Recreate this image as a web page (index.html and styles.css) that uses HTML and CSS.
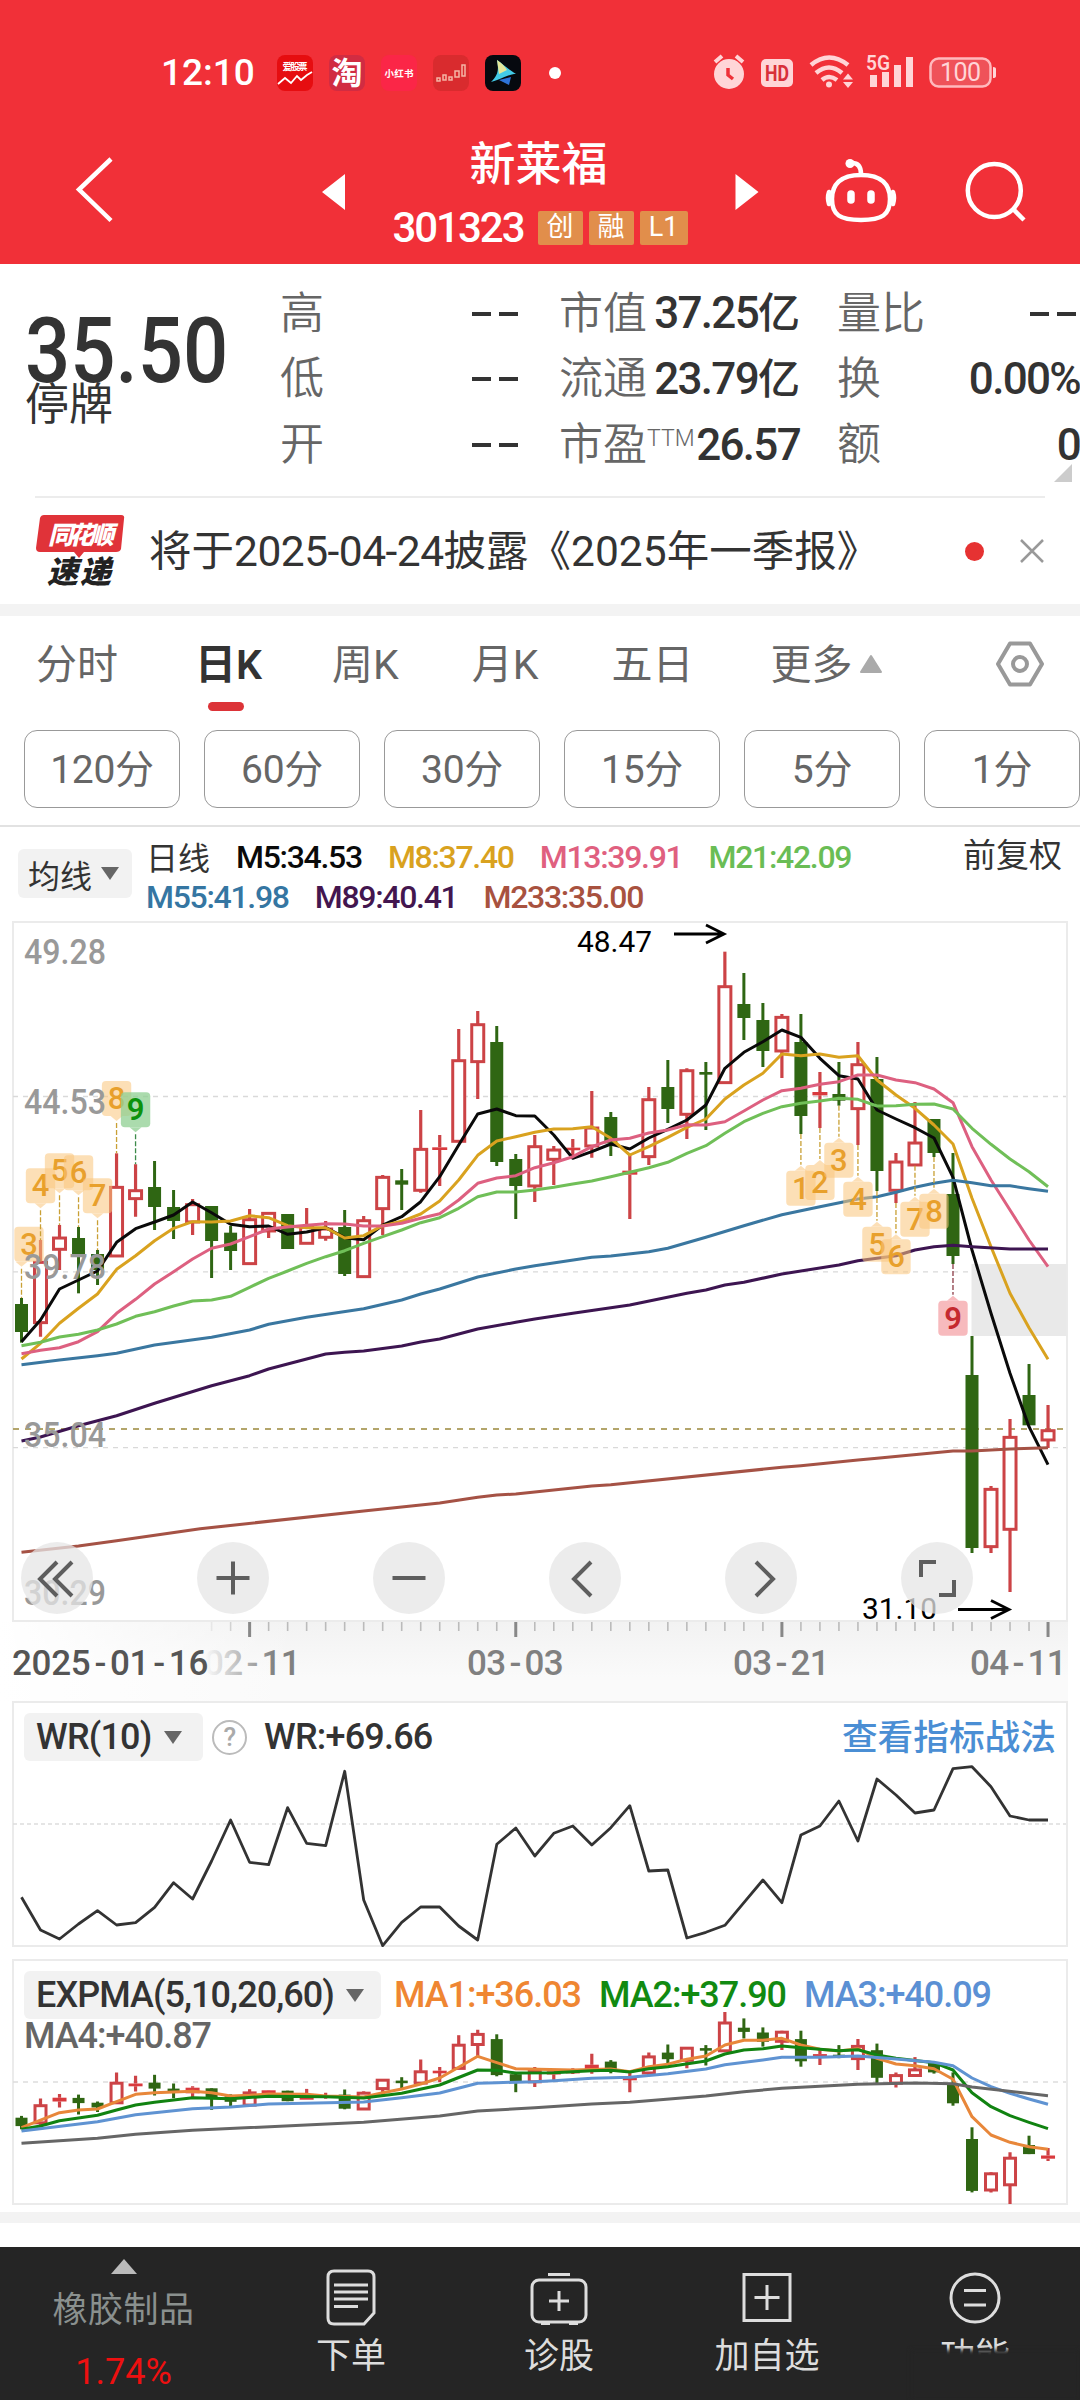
FILE: index.html
```html
<!DOCTYPE html>
<html lang="zh-CN">
<head>
<meta charset="utf-8">
<title>新莱福 301323</title>
<link rel="stylesheet" href="styles.css">
</head>
<body>
<header class="top">
  <div class="status">
    <span class="clock">12:10</span>
    <div class="apps">
      <svg width="36" height="36" viewBox="0 0 36 36"><rect width="36" height="36" rx="8" fill="#e60d10"/><text x="18" y="15" class="t-app" textLength="25">爱股票</text><path d="M1 29L8 23l6 5 6-7 4 4 6-5 5-3" fill="none" stroke="#fff" stroke-width="1.8"/></svg>
      <svg width="36" height="36" viewBox="0 0 36 36"><rect width="36" height="36" rx="8" fill="#d12c42"/><text x="18" y="29" class="t-tao">淘</text></svg>
      <svg width="36" height="36" viewBox="0 0 36 36"><rect width="36" height="36" rx="8" fill="#fb2647"/><text x="18" y="22" class="t-app" textLength="29">小红书</text></svg>
      <svg width="36" height="36" viewBox="0 0 36 36"><rect width="36" height="36" rx="8" fill="#d92b2e"/><path d="M4 23h3v3H4zM10 20h3v5h-3zM16 22h3v3h-3zM22 16h4v6h-4zM29 10h3v11h-3z" fill="none" stroke="#f5b5a5" stroke-width="1.5"/></svg>
      <svg width="36" height="36" viewBox="0 0 36 36"><rect width="36" height="36" rx="8" fill="#06090f"/><path d="M12 5c5 3 8 7 19 14-7 0-12 4-25 8 7-7 8-12 6-22z" fill="#43cbe8"/><path d="M12 5c5 3 8 7 10 10l-8 4z" fill="#e4e79a"/><path d="M14 25l12-3-2 8z" fill="#2d72d8"/></svg>
    </div>
    <i class="more-dot"></i>
    <svg class="sys" width="290" height="40" viewBox="710 53 290 40">
      <g fill="#ffd5d7">
        <circle cx="729" cy="74" r="15"/><path d="M715 62l7-6M743 62l-7-6" stroke="#ffd5d7" stroke-width="4"/>
        <path d="M728 68v7l5 4" fill="none" stroke="#ef3038" stroke-width="3.500"/>
        <rect x="761" y="59" width="32" height="28" rx="5"/>
        <text x="777" y="80.500" class="t-hd" textLength="24" lengthAdjust="spacingAndGlyphs">HD</text>
        <g fill="none" stroke="#ffd5d7" stroke-width="4.500"><path d="M811 65q18-15 37 0M816 73q13-11 26 0M822 80q7-6 15 0"/></g>
        <circle cx="829" cy="84.500" r="3"/><path d="M843 79.500l5-6 5 6zM843 82l5 6 5-6z"/>
        <text x="866" y="70" class="t-5g" textLength="24" lengthAdjust="spacingAndGlyphs">5G</text>
        <path d="M870 75h7v12h-7zM882 72h7v15h-7zM894 65h7v22h-7zM906 57h7v30h-7z"/>
        <rect x="930.500" y="58.500" width="60" height="28" rx="8" fill="#ef5259" stroke="#ffb9bd" stroke-width="2.500"/>
        <path d="M993 67q3 0 3 2v7q0 2-3 2z"/>
        <text x="960.500" y="81" class="t-bat" textLength="41">100</text>
      </g>
    </svg>
  </div>
  <div class="titlebar">
    <svg width="1080" height="90" viewBox="0 150 1080 90" class="nav-icons">
      <g fill="none" stroke="#fff" stroke-width="4.500">
        <path d="M111 159L79 189.500l32 31"/>
        <path d="M861 175c21 0 29 10 29 24 0 16-8 21-29 21s-29-5-29-21c0-14 8-24 29-24z"/>
        <path d="M861 174q0-11-9-11M829 192q-2 6 0 12M893 192q2 6 0 12" stroke-linecap="round"/>
        <path d="M851 194v6M871 194v6" stroke-width="7.500" stroke-linecap="round"/>
        <circle cx="994.300" cy="190.500" r="26.500"/><path d="M1013 209l11 11"/>
      </g>
      <circle cx="850" cy="163.500" r="4.500" fill="#fff"/>
      <path d="M322 192l23-18v36zM758.500 192l-23-18v36z" fill="#fff"/>
    </svg>
    <div class="stock">
      <h1>新莱福</h1>
      <div class="code-row"><span class="code">301323</span><span class="tag">创</span><span class="tag">融</span><span class="tag wide">L1</span></div>
    </div>
  </div>
</header>

<section class="quote">
  <div class="last"><strong>35.50</strong><span>停牌</span></div>
  <dl class="c1"><div><dt>高</dt><dd class="dash"><i></i><i></i></dd></div><div><dt>低</dt><dd class="dash"><i></i><i></i></dd></div><div><dt>开</dt><dd class="dash"><i></i><i></i></dd></div></dl>
  <dl class="c2"><div><dt>市值</dt><dd>37.25<b>亿</b></dd></div><div><dt>流通</dt><dd>23.79<b>亿</b></dd></div><div><dt>市盈<sup>TTM</sup></dt><dd>26.57</dd></div></dl>
  <dl class="c3"><div><dt>量比</dt><dd class="dash"><i></i><i></i></dd></div><div><dt>换</dt><dd>0.00%</dd></div><div><dt>额</dt><dd>0</dd></div></dl>
  <svg class="corner" width="18" height="18" viewBox="0 0 18 18"><path d="M18 0v18H0z" fill="#ccc"/></svg>
</section>

<section class="notice">
  <svg width="90" height="80" viewBox="0 0 90 80">
    <path d="M9 4h77q4 0 3 4l-3 30q-1 3-5 3H49l-5 6-5-6H5q-4 0-4-4L5 7q1-3 4-3z" fill="#e03339"/>
    <text x="46" y="33" class="t-ths" textLength="66">同花顺</text>
    <text x="44" y="72" class="t-sd" textLength="64">速递</text>
  </svg>
  <p>将于<span class="iso">2025-04-24</span>披露《2025年一季报》</p>
  <i class="unread"></i>
  <svg class="close" width="26" height="26" viewBox="0 0 26 26"><path d="M2 2l22 22M24 2L2 24" stroke="#999" stroke-width="2.500"/></svg>
</section>

<nav class="tabs">
  <span>分时</span><span class="on">日K</span><span>周K</span><span>月K</span><span>五日</span><span>更多</span>
  <svg width="22" height="20" viewBox="0 0 22 20"><path d="M11 2l10 16H1z" fill="#aaa" stroke="#aaa" stroke-width="2" stroke-linejoin="round"/></svg>
  <svg class="gear" width="50" height="46" viewBox="0 0 50 46"><g fill="none" stroke="#999" stroke-width="4" stroke-linejoin="round"><path d="M15 2.500h20L47 23 35 43.500H15L3 23z"/><circle cx="25" cy="23" r="7"/></g></svg>
</nav>
<div class="periods"><span>120分</span><span>60分</span><span>30分</span><span>15分</span><span>5分</span><span>1分</span></div>

<section class="legend">
  <span class="chip small">均线<svg width="18" height="13" viewBox="0 0 18 13"><path d="M0 0h18L9 13z" fill="#666"/></svg></span>
  <div class="ma">
    <div><span class="cn">日线</span><span class="m5">M5:34.53</span><span class="m8">M8:37.40</span><span class="m13">M13:39.91</span><span class="m21">M21:42.09</span></div>
    <div><span class="m55">M55:41.98</span><span class="m89">M89:40.41</span><span class="m233">M233:35.00</span></div>
  </div>
  <span class="cn adj">前复权</span>
</section>

<section class="kline">
  <svg id="kline" width="1080" height="702" viewBox="0 20 1080 702"></svg>
  <div class="controls">
    <button><svg viewBox="0 0 72 72"><path d="M36 20L19 37l17 17M51 20L34 37l17 17"/></svg></button>
    <button><svg viewBox="0 0 72 72"><path d="M36 19.500v33M19.500 36h33"/></svg></button>
    <button><svg viewBox="0 0 72 72"><path d="M19.500 36h33"/></svg></button>
    <button><svg viewBox="0 0 72 72"><path d="M42 20L25 37l17 17"/></svg></button>
    <button><svg viewBox="0 0 72 72"><path d="M31 20l17 17-17 17"/></svg></button>
    <button><svg viewBox="0 0 72 72"><path d="M20 35V20h15M53 38v15H38"/></svg></button>
  </div>
</section>
<section class="dates"><svg id="dates" width="1080" height="79" viewBox="0 0 1080 79"></svg></section>

<section class="panel wr">
  <div class="head"><span class="chip">WR(10)<svg width="18" height="13" viewBox="0 0 18 13"><path d="M0 0h18L9 13z" fill="#666"/></svg></span><span class="help">?</span><span class="val">WR:+69.66</span><span class="link">查看指标战法</span></div>
  <svg id="wr" class="plot" width="1080" height="246" viewBox="0 11 1080 246"></svg>
</section>
<section class="panel exp">
  <div class="head"><span class="chip">EXPMA(5,10,20,60)<svg width="18" height="13" viewBox="0 0 18 13"><path d="M0 0h18L9 13z" fill="#666"/></svg></span><span class="e1">MA1:+36.03</span><span class="e2">MA2:+37.90</span><span class="e3">MA3:+40.09</span></div>
  <div class="second">MA4:+40.87</div>
  <svg id="exp" class="plot" width="1080" height="246" viewBox="0 9 1080 246"></svg>
</section>

<footer class="bar">
  <div class="sector"><svg width="26" height="15" viewBox="0 0 26 15"><path d="M13 0l13 15H0z" fill="#bbb"/></svg><span>橡胶制品</span><em>1.74%</em></div>
  <div class="item"><svg width="60" height="60" viewBox="0 0 60 60"><path d="M13 4h34q6 0 6 6v36L43 57H13q-6 0-6-6V10q0-6 6-6zM13 18h34M13 25h34M13 32h34M13 39.500h24"/></svg><span>下单</span></div>
  <div class="item"><svg width="60" height="60" viewBox="0 0 60 60"><rect x="3" y="13" width="54" height="42" rx="7"/><path d="M19 7.500h22M30 24v20M20 34h20M12 56.500h9M40 56.500h9" stroke-width="3.500"/></svg><span>诊股</span></div>
  <div class="item"><svg width="60" height="60" viewBox="0 0 60 60"><path d="M7 7.500h46v46H7zM30 18v25M17.500 30.500h25"/></svg><span>加自选</span></div>
  <div class="item last-item"><svg width="60" height="60" viewBox="0 0 60 60"><circle cx="30" cy="31" r="24"/><path d="M19 23.500h22M19 38h22"/></svg><span>功能</span></div>
</footer>
<script src="charts.js"></script>
</body>
</html>
```
FILE: styles.css
```css
* { box-sizing: border-box; }
body { margin: 0; width: 1080px; height: 2400px; overflow: hidden; background: #fff; color: #333; font-family: Roboto, "Noto Sans CJK SC", sans-serif; }
h1, p, dl, dd { margin: 0; font-weight: 400; }
i, em { font-style: normal; }
svg { display: block; flex: none; }
span { white-space: nowrap; }

.top { height: 264px; background: #f13038; color: #fff; }
.status { display: flex; align-items: center; height: 94px; padding: 52px 80px 0 161px; }
.clock { width: 116px; font-size: 37px; line-height: 40px; font-weight: 500; }
.apps { display: flex; gap: 16px; }
.more-dot { width: 12px; height: 12px; margin-left: 28px; border-radius: 50%; background: #fff; }
.sys { margin-left: auto; }
.t-app { font-size: 9.500px; font-weight: 700; fill: #fff; text-anchor: middle; }
.t-tao { font-size: 31px; font-weight: 700; fill: #fff; text-anchor: middle; }
.t-hd { font-size: 22px; font-weight: 700; fill: #d8303a; text-anchor: middle; }
.t-5g { font-size: 21px; font-weight: 600; }
.t-bat { font-size: 25px; text-anchor: middle; }

.titlebar { display: grid; height: 170px; }
.nav-icons, .stock { grid-area: 1 / 1; }
.nav-icons { margin-top: 56px; }
.stock { display: flex; flex-direction: column; align-items: center; padding-top: 45px; }
.stock h1 { font-size: 46px; line-height: 50px; margin-left: -3px; font-weight: 500; }
.code-row { display: flex; align-items: center; gap: 6px; height: 40px; margin-top: 19px; }
.code { font-size: 42px; font-weight: 500; line-height: 40px; letter-spacing: -2px; margin-right: 8px; }
.tag { width: 45px; height: 34px; border-radius: 2px; background: #e18e4b; font-size: 27px; line-height: 33px; text-align: center; }
.tag.wide { width: 48px; }

.quote { position: relative; display: flex; height: 232px; padding-top: 17px; }
.last { width: 280px; padding: 29px 0 0 25px; }
.last strong { display: block; height: 70px; font-size: 90px; line-height: 84px; font-weight: 500; transform: scaleX(.885); transform-origin: 0 0; }
.last span { display: block; font-size: 44px; line-height: 50px; color: #333; }
.quote dl > div { display: flex; justify-content: space-between; align-items: center; height: 65.500px; font-size: 44px; line-height: 60px; }
.quote dt { color: #666; font-weight: 350; }
.quote dd { font-size: 44px; font-weight: 500; letter-spacing: -1.700px; color: #333; }
.quote dd b { font-size: 42px; font-weight: 500; letter-spacing: 0; }
.c1 { width: 238px; margin-right: 41px; }
.c2 { width: 241px; margin-right: 37px; }
.c3 { width: 243px; }
.quote .dash { display: flex; gap: 8px; }
.c3 .dash { margin-right: 4px; }
.dash i { width: 19px; height: 4px; background: #333; }
.quote sup { font-size: 23px; line-height: 0; vertical-align: 14px; }
.corner { position: absolute; right: 8px; top: 200px; }

.notice { display: flex; align-items: center; height: 108px; margin: 0 35px; border-top: 2px solid #ececec; }
.notice p { margin: -7px 0 0 24px; font-size: 42.500px; white-space: nowrap; }
.iso { letter-spacing: -.500px; }
.unread { width: 19px; height: 19px; margin-left: auto; border-radius: 50%; background: #e63232; }
.close { margin-left: 35px; }
.t-ths { font-size: 25px; font-weight: 900; fill: #fff; text-anchor: middle; font-style: oblique; }
.t-sd { font-size: 31px; font-weight: 900; fill: #222; text-anchor: middle; font-style: oblique; }

.tabs { display: flex; align-items: center; height: 114px; padding: 0 35px 0 36px; border-top: 12px solid #f3f3f3; font-size: 41px; color: #666; }
.tabs span { position: relative; top: -2px; margin-right: 73px; line-height: 60px; font-weight: 400; }
.tabs span:first-child { margin-right: 77px; }
.tabs span:nth-child(6) { margin: 0 8px 0 4px; }
.tabs .on { color: #333; font-weight: 600; margin-right: 70px; }
.tabs .on::after { content: ""; position: absolute; left: 13px; bottom: -16px; width: 36px; height: 9px; border-radius: 5px; background: #dc3338; }
.tabs svg { position: relative; top: -3px; }
.gear { margin-left: auto; }
.periods { display: flex; gap: 24px; height: 109px; padding: 12px 0 0 24px; border-bottom: 2px solid #e2e2e2; }
.periods span { flex: none; width: 156px; height: 78px; border: 1.500px solid #999; border-radius: 13px; font-size: 39px; line-height: 79px; color: #666; text-align: center; letter-spacing: -.300px; }

.legend { display: flex; height: 93px; padding: 10px 18px 0 18px; font-size: 32px; font-weight: 500; }
.chip { display: flex; align-items: center; gap: 12px; height: 48px; padding: 0 12px; border-radius: 6px; background: #f2f2f2; font-size: 36px; }
.chip.small { width: 114px; height: 49px; margin-top: 12px; padding: 0 10px; font-size: 32px; gap: 9px; font-weight: 400; }
.ma { margin-left: 14px; }
.ma div { display: flex; gap: 26px; height: 40px; align-items: center; letter-spacing: -1.300px; }
.cn { font-size: 32px; letter-spacing: 0; font-weight: 400; }
.ma .cn { position: relative; top: -1px; }
.adj { margin-left: auto; height: 40px; line-height: 38px; font-size: 33px; }
.m5 { color: #0a0a0a; } .m8 { color: #d9a21f; } .m13 { color: #e0607f; } .m21 { color: #6abd55; }
.m55 { color: #3576a2; } .m89 { color: #43164f; } .m233 { color: #a8523f; }

.kline { position: relative; height: 702px; }
.controls { position: absolute; left: 21px; top: 622px; display: flex; gap: 104px; }
.controls button { width: 72px; height: 72px; padding: 0; border: 0; border-radius: 50%; background: rgba(230, 230, 230, .75); }
.controls path { fill: none; stroke: #5e5e5e; stroke-width: 4; }
.axis { font-size: 35px; fill: #999; font-weight: 500; }
.extreme { font-size: 29px; fill: #000; }
.count { font-size: 31px; text-anchor: middle; }
.dates { height: 79px; margin-right: 12px; background: linear-gradient(90deg, #fff 0, rgba(255, 255, 255, 0) 300px), linear-gradient(#f2f2f2, #fafafa 70%); }
.date { font-size: 35px; fill: #808080; font-weight: 500; }
.date.start { fill: #555; }

.panel { position: relative; height: 246px; }
.panel .plot { position: absolute; left: 0; top: 0; }
.wr { margin-bottom: 12px; }
.head { display: flex; align-items: center; height: 48px; margin: 0 24px 0 24px; position: relative; top: 12px; z-index: 1; font-size: 36px; font-weight: 500; letter-spacing: -.800px; }
.help { width: 35px; height: 35px; margin: 0 17px 0 9px; border: 2.500px solid #bbb; border-radius: 50%; color: #aaa; font-size: 26px; line-height: 31px; text-align: center; }
.link { position: relative; top: -3px; margin-left: auto; color: #4a8ed4; font-size: 35.700px; letter-spacing: 0; font-weight: 500; }
.wr .head .chip { width: 179px; }
.exp .chip { width: 357px; margin-right: 13px; letter-spacing: -.950px; }
.e1, .e2, .e3 { width: 205px; letter-spacing: -1.050px; }
.e1 { color: #ef8632; } .e2 { color: #118a11; } .e3 { color: #5b90d4; }
.second { position: relative; z-index: 1; margin: 4px 0 0 24px; padding-top: 2px; line-height: 46px; font-size: 36px; font-weight: 500; letter-spacing: -1.050px; color: #666; }
.exp::after { content: ""; position: absolute; left: 0; top: 253px; width: 1080px; height: 11px; background: #f3f3f3; }
.exp { margin-bottom: 42px; }

.bar { position: relative; display: flex; height: 153px; background: #252525; color: #ddd; font-size: 35px; }
.sector { width: 247px; display: flex; flex-direction: column; align-items: center; padding-top: 12px; color: #8a908e; }
.sector span { margin-top: 15px; line-height: 44px; letter-spacing: .500px; }
.sector em { margin-top: 17px; color: #ee1010; font-size: 36px; line-height: 44px; }
.item { width: 208px; display: flex; flex-direction: column; align-items: center; padding-top: 20px; }
.item path, .item rect, .item circle { fill: none; stroke: #ddd; stroke-width: 3; }
.item span { margin-top: 5px; line-height: 50px; }
.last-item { position: relative; }
.last-item::after { content: ""; position: absolute; left: 40px; top: 103px; width: 168px; height: 50px; background: #252525; filter: blur(2px); }
```
FILE: charts.js
```js
// Vertical data is in thirds of a pixel; sessions are spaced evenly.
const X = i => 21.5 + 19.01 * i;
const Y = v => v / 3;
// [rising, high, body top, body bottom, low]
const K = [
[0,1194,1212,1296,1328],[1,1020,1085,1270,1310],[1,975,1012,1050,1110],[0,981,1014,1066,1180],[0,1050,1062,1110,1155],
[1,760,860,1070,1070],[1,793,870,898,950],[0,783,861,921,990],[0,870,921,963,1017],[1,897,912,968,1005],
[0,918,918,1023,1134],[0,978,998,1053,1110],[1,927,957,1093,1093],[1,936,938,995,1014],[0,942,942,1047,1047],
[1,924,980,1032,1032],[1,963,985,1014,1022],[0,930,981,1122,1128],[1,948,960,1132,1132],[1,825,830,928,1005],
[0,807,841,854,930],[1,630,746,873,878],[1,705,742,750,858],[1,387,480,726,726],[1,333,372,487,597],
[0,378,426,786,798],[0,762,777,858,957],[1,705,738,860,906],[1,738,748,780,855],[1,717,743,750,775],
[1,573,682,740,773],[0,636,651,730,768],[1,765,812,824,957],[1,561,597,772,795],[0,480,561,627,669],
[1,505,510,645,717],[0,486,516,524,690],[1,155,258,550,550],[0,219,312,354,420],[0,309,360,453,501],
[1,342,350,455,534],[0,342,426,648,702],[1,516,576,586,684],[0,486,582,602,617],[1,426,492,628,735],
[0,471,537,813,873],[1,759,784,873,909],[1,606,727,797,797],[0,657,657,759,771],[0,759,882,1068,1092],
[0,1308,1425,1944,1959],[1,1758,1766,1942,1959],[1,1557,1610,1890,2076],[0,1392,1485,1576,1576],[1,1515,1590,1622,1644]];
const full = a => a.map((v, i) => [i, v]);
const line = (pts, color, w = 3) =>
  `<polyline fill="none" stroke="${color}" stroke-width="${w}" stroke-linejoin="round" points="${pts.map(([i, v]) => X(i).toFixed(1) + ',' + Y(v).toFixed(1)).join(' ')}"/>`;
const candles = (f, half) => K.map(([up, h, t, b, l], i) => {
  const x = X(i); [h, t, b, l] = [h, t, b, l].map(v => Y(f(v)));
  if (!up) return `<path d="M${x} ${h}V${l}" stroke="#2f6613" stroke-width="3"/><rect x="${x - half}" y="${t}" width="${half * 2}" height="${Math.max(b - t, 2.6)}" fill="#2f6613"/>`;
  const wick = `<path d="M${x} ${h}V${t}M${x} ${b}V${l}" stroke="#cc4346" stroke-width="3.2"/>`;
  if (b - t < 6) return wick + `<rect x="${x - half - 1}" y="${t}" width="${half * 2 + 2}" height="${Math.max(b - t, 2.6)}" fill="#d93a3e"/>`;
  return wick + `<rect x="${x - half + .5}" y="${t + .7}" width="${half * 2 - 1}" height="${b - t - 1.4}" fill="#fff" stroke="#cc4346" stroke-width="3"/>`;
}).join('');
const hdash = (y, c = '#d9d9d9', w = 1.3, d = '5 5') => `<path d="M13 ${y}H1066" stroke="${c}" stroke-width="${w}" stroke-dasharray="${d}"/>`;
const frame = (y, h) => `<rect x="13" y="${y}" width="1054" height="${h}" fill="none" stroke="#ebebeb" stroke-width="2"/>`;
const label = (x, y, s, len, cls) => `<text x="${x}" y="${y}" class="${cls}" textLength="${len}" lengthAdjust="spacingAndGlyphs">${s}</text>`;

const m5 = full([1325,1260,1167,1140,1113,1027,986,966,945,906,938,973,980,978,1003,996,983,1013,1019,975,950,905,830,735,642,627,647,648,705,775,755,732,747,714,688,660,615,505,457,425,390,412,475,527,537,630,657,683,714,832,1050,1240,1420,1580,1694]);
const m8 = full([1377,1330,1270,1225,1182,1108,1067,1022,985,965,966,963,947,953,977,983,983,1014,1007,977,964,942,903,840,766,723,710,697,687,686,680,715,765,740,712,682,657,597,555,520,462,467,462,472,467,540,585,625,675,732,895,1040,1180,1283,1378]);
const m13 = full([1361,1351,1343,1325,1295,1240,1198,1152,1115,1077,1045,1032,1010,987,981,976,971,972,978,978,970,955,941,900,850,834,827,803,788,770,740,720,715,699,690,674,675,665,633,600,572,565,553,545,525,525,540,548,567,608,740,840,930,1020,1100]);
const m21 = full([1337,1327,1311,1303,1290,1272,1249,1235,1218,1203,1200,1189,1162,1135,1113,1090,1070,1052,1030,1010,990,968,953,925,890,876,876,870,862,852,843,830,817,803,787,760,737,700,665,640,620,610,603,595,598,618,617,613,612,627,685,733,777,815,860]);
const m55 = [[0,1394],[2,1380],[4,1367],[5,1360],[7,1335],[10,1312],[12,1290],[13,1273],[15,1252],[18,1226],[20,1200],[21,1182],[22,1167],[24,1131],[26,1107],[27,1097],[30,1072],[31,1068],[33,1055],[34,1045],[36,1012],[38,977],[40,944],[42,920],[44,897],[45,890],[46,877],[47,862],[48,850],[49,841],[50,848],[51,857],[52,857],[53,866],[54,874]];
const m89 = [[0,1623],[1,1611],[3,1577],[5,1547],[7,1510],[10,1457],[12,1427],[13,1407],[14,1392],[16,1362],[17,1357],[18,1353],[20,1338],[21,1326],[22,1317],[24,1287],[26,1267],[27,1257],[29,1240],[32,1215],[35,1180],[36,1170],[37,1155],[38,1147],[40,1122],[43,1095],[44,1082],[46,1067],[47,1050],[48,1040],[49,1036],[50,1040],[52,1047],[54,1047]];
const m233 = [[0,1957],[3,1938],[5,1922],[9.4,1886],[18,1833],[22,1809],[24,1792],[25,1785],[26,1782],[30,1758],[31,1754],[40,1702],[41,1697],[44,1680],[45,1675],[49,1653],[50,1653],[52,1647],[54,1643]];

// Nine-turn counter flags: [session, digit, box top, x shift]
const above = [[0,3,980,7.5],[1,4,805,0],[2,5,760,0],[3,6,766,0],[4,7,835,0],[5,8,543,0],[6,9,577,0]];
const below = [[41,1,797],[42,2,780],[43,3,713],[44,4,830],[45,5,965],[46,6,1003],[47,7,890],[48,8,866],[49,9,1187]];
const flag = (i, n, y, up, dx = 0, hi, lo) => {
  const x = X(i) + dx, p = X(i), top = up ? Y(y) + 5 : Y(y);
  const nine = n === 9, red = nine && up;
  const bg = red ? '#f5a3a8' : nine ? '#8fd092' : '#fbc67c', fg = red ? '#c52a30' : nine ? '#0c920c' : '#e8a02c';
  const tip = up ? `M${p - 6} ${top}l6-5 6 5z` : `M${p - 6} ${top + 35}l6 5 6-5z`;
  const [a, b] = up ? [Y(lo), top - 6] : [top + 42, Y(hi)];
  return `<path d="M${p} ${a}V${b}" stroke="${red ? '#8c3a46' : nine ? '#3d8a4a' : '#c9a035'}" stroke-width="1.3" stroke-dasharray="5 2"/>` +
    `<g fill="${bg}" opacity="${nine ? .75 : .55}"><rect x="${x - 14.7}" y="${top}" width="29.4" height="35" rx="4"/><path d="${tip}"/></g>` +
    `<text x="${x}" y="${top + 28}" class="count" fill="${fg}" font-weight="${nine ? 600 : 500}">${n}</text>`;
};
const arrow = (x1, x2, y) => `<path d="M${x1} ${y}H${x2}M${x2 - 18} ${y - 9}L${x2} ${y}l-18 9" fill="none" stroke="#000" stroke-width="2.8"/>`;

document.getElementById('kline').innerHTML =
  frame(22, 699) + hdash(196.5) + hdash(371.8) + hdash(547.6) +
  '<rect x="971.500" y="364" width="95" height="72" fill="#e9e9e9"/>' + hdash(529, '#b3a56b', 2, '6 6') +
  candles(v => v, 6.5) +
  line(m5, '#0a0a0a') + line(m8, '#d9a21f') + line(m13, '#dd6080') + line(m21, '#70bf58') +
  line(m55, '#3a77a0') + line(m89, '#3d1551') + line(m233, '#a55245') +
  above.map(([i, n, y, dx]) => flag(i, n, y, false, dx, K[i][1])).join('') +
  below.map(([i, n, y]) => flag(i, n, y, true, 0, 0, K[i][4])).join('') +
  label(24, 64, '49.28', 82, 'axis') + label(24, 214, '44.53', 82, 'axis') + label(24, 379, '39.78', 82, 'axis') +
  label(24, 547, '35.04', 82, 'axis') + label(24, 705, '30.29', 82, 'axis') +
  label(577, 52, '48.47', 75, 'extreme') + arrow(674, 724, 34) +
  label(862, 719, '31.10', 75, 'extreme') + arrow(958, 1009, 709.5);

let ticks = '';
for (let i = 10; i <= 54; i++) {
  const major = (i - 12) % 14 === 0;
  ticks += `<path d="M${X(i)} 0v${major ? 15 : 9}" stroke="${major ? '#888' : '#bbb'}" stroke-width="${major ? 3 : 1.6}" opacity="${i < 11 ? .25 : i < 12 ? .6 : 1}"/>`;
}
// Each character sits on its own advance, so the hyphen takes a full digit-wide slot.
const dateText = (x, s, step, cls, fill = '') => `<text y="53" class="${cls}" ${fill} x="${[...s].map((c, i) => x + i * step + (c === '-' ? 4 : 0)).join(' ')}">${s.replace(/-/g, '–').replace(/–/g, '-')}</text>`;
document.getElementById('dates').innerHTML =
  '<defs><linearGradient id="fade" gradientUnits="userSpaceOnUse" x1="205" x2="275"><stop offset="0" stop-color="#808080" stop-opacity="0"/><stop offset="1" stop-color="#808080"/></linearGradient></defs>' +
  ticks + dateText(12, '2025-01-16', 19.6, 'date start') +
  dateText(204, '02-11', 19.2, 'date', 'style="fill:url(#fade)"') +
  dateText(467, '03-03', 19.2, 'date') + dateText(733, '03-21', 19.2, 'date') + dateText(970, '04-11', 19.2, 'date');

document.getElementById('wr').innerHTML = frame(12, 244) + hdash(134, '#ddd', 1.3, '4 3') +
  line(full([622,720,747,702,662,705,698,652,578,627,513,390,517,524,353,460,467,244,630,767,697,651,651,708,750,463,414,498,430,408,465,413,347,543,540,744,727,706,638,570,638,435,408,333,453,267,315,369,360,236,230,290,378,390,390]), '#333', 2.8);

document.getElementById('exp').innerHTML = frame(10, 244) + hdash(132, '#ddd') + candles(v => v * .3 + 139.5, 6) +
  line([[0,533],[2,488],[3,480],[4,477],[5,455],[6,433],[7,428],[9,424],[10,428],[11,438],[12,436],[13,432],[15,433],[16,438],[18,441],[19,428],[20,417],[21,402],[22,384],[23,352],[24,319],[25,338],[26,356],[29,360],[31,357],[32,365],[33,350],[34,343],[35,328],[36,318],[37,285],[38,271],[39,271],[40,265],[41,285],[42,298],[43,303],[44,296],[45,325],[46,342],[47,347],[48,356],[49,388],[50,500],[51,555],[52,577],[53,590],[54,598]], '#e8873a') +
  line([[0,538],[1,528],[2,512],[4,496],[5,480],[6,465],[7,457],[9,443],[11,446],[13,439],[16,440],[18,444],[20,430],[22,405],[24,360],[25,361],[26,369],[28,368],[30,362],[31,361],[32,366],[33,356],[34,350],[36,333],[37,312],[38,300],[39,296],[40,288],[41,293],[43,302],[44,299],[45,315],[46,325],[48,338],[49,360],[50,428],[51,470],[52,497],[53,517],[54,536]], '#118311') +
  line([[0,543],[4,515],[6,494],[9,476],[11,471],[13,462],[18,456],[20,443],[22,429],[24,400],[25,398],[27,395],[28,392],[30,385],[32,382],[34,371],[36,357],[37,344],[39,330],[40,322],[42,322],[44,318],[46,327],[48,337],[49,347],[50,384],[51,410],[52,430],[53,447],[54,463]], '#5f93d2') +
  line([[0,580],[4,565],[6,553],[9,541],[18,517],[22,498],[24,483],[27,473],[30,462],[32,457],[36,438],[38,425],[40,415],[44,403],[47,399],[49,401],[50,411],[54,437]], '#666');
```
